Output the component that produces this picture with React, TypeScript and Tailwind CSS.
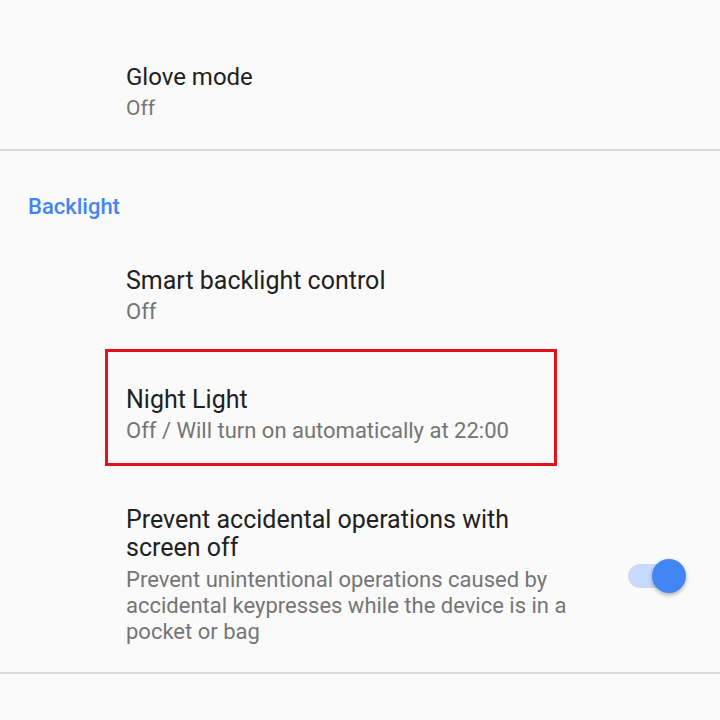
import React from 'react';

function Item({ title, summary }: { title: string; summary: string }) {
  return (
    <div>
      <div className="text-[25px] leading-[32px] text-[#212121]">{title}</div>
      <div className="text-[22px] leading-[30px] text-[#757575]">{summary}</div>
    </div>
  );
}

function Toggle() {
  return (
    <div className="relative flex items-center w-[58px] h-[36px]">
      <div className="w-[48px] h-[24px] rounded-full bg-[#c6dafc]" />
      <div className="absolute right-0 top-[1px] w-[34px] h-[34px] rounded-full bg-[#4285f4] shadow-[0_2px_4px_rgba(0,0,0,0.3)]" />
    </div>
  );
}

export default function App() {
  return (
    <div className="min-h-screen bg-[#fafafa] font-['Roboto',sans-serif] overflow-hidden">
      {/* Display section tail */}
      <div className="pt-[61px] pb-[26px] pl-[126px]">
        <div className="text-[24px] leading-[32px] text-[#212121]">Glove mode</div>
        <div className="text-[21px] leading-[30px] text-[#757575]">Off</div>
      </div>
      <div className="h-[2px] bg-[#dcdcdc]" />

      {/* Backlight section */}
      <div className="pt-[42px] pl-[28px] text-[22px] leading-[28px] font-medium text-[#4285f4]">
        Backlight
      </div>

      <div className="mt-[44px] pl-[126px]">
        <Item title="Smart backlight control" summary="Off" />
      </div>

      <div className="mt-[57px] pl-[126px] relative">
        <Item title="Night Light" summary="Off / Will turn on automatically at 22:00" />
        <div className="absolute top-[-35px] left-[105px] w-[452px] h-[117px] border-[3px] border-[#e0121b]" />
      </div>

      <div className="mt-[60px] pl-[126px] pr-[34px] flex items-center justify-between">
        <div className="w-[450px]">
          <div className="text-[25px] leading-[28px] text-[#212121]">
            Prevent accidental operations with screen off
          </div>
          <div className="mt-[5px] text-[22px] leading-[26px] text-[#757575]">
            Prevent unintentional operations caused by accidental keypresses while the device is in a pocket or bag
          </div>
        </div>
        <Toggle />
      </div>
      <div className="mt-[27px] h-[2px] bg-[#dcdcdc]" />
    </div>
  );
}
